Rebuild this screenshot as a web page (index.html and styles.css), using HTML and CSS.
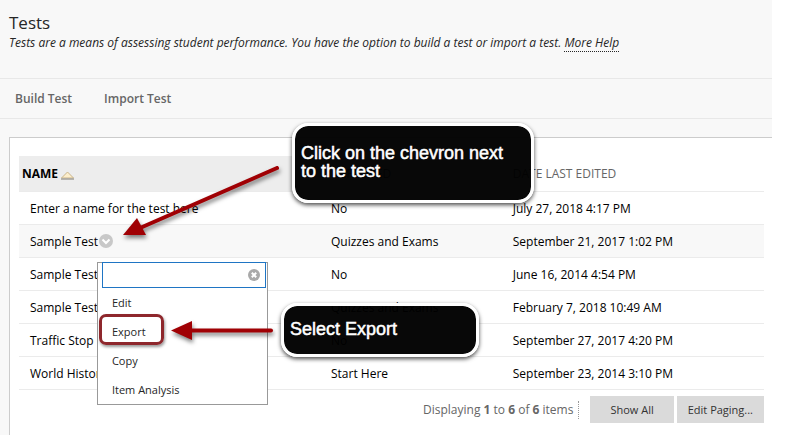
FILE: index.html
```html
<!DOCTYPE html>
<html lang="en">
<head>
    <meta charset="UTF-8">
    <meta name="viewport" content="width=device-width, initial-scale=1.0">
    <title>Tests</title>
    <link rel="stylesheet" href="styles.css">
</head>
<body>
    <main class="page">
        <header class="page-header">
            <h1>Tests</h1>
            <p>Tests are a means of assessing student performance. You have the option to build a test or import a test. <a href="#help">More Help</a></p>
        </header>

        <nav class="action-bar">
            <a href="#build">Build Test</a>
            <a href="#import">Import Test</a>
        </nav>

        <section class="panel">
            <table class="tests">
                <thead>
                    <tr>
                        <th class="col-name sorted" scope="col">NAME
                            <svg class="sort-icon" width="13" height="9" viewBox="0 0 13 9" aria-hidden="true">
                                <path d="M0.5 7 L6.5 1 L12.5 7 Z" fill="#fdeecb" stroke="#c9b48a"/>
                                <path d="M0 8 H13" stroke="#a3a09a" stroke-width="1.5"/>
                            </svg>
                        </th>
                        <th class="col-deployed" scope="col">DEPLOYED</th>
                        <th class="col-date" scope="col">DATE LAST EDITED</th>
                    </tr>
                </thead>
                <tbody>
                    <tr>
                        <td>Enter a name for the test here</td>
                        <td>No</td>
                        <td>July 27, 2018 4:17 PM</td>
                    </tr>
                    <tr class="active">
                        <td>
                            <div class="name-cell">
                                Sample Test
                                <span class="menu-anchor">
                                    <button class="chevron" type="button" aria-label="Test options">
                                        <svg width="14" height="14" viewBox="0 0 14 14" aria-hidden="true">
                                            <circle cx="7" cy="7" r="7" fill="#c8c8c8"/>
                                            <path d="M3.5 5.5 L7 9 L10.5 5.5" fill="none" stroke="#fff" stroke-width="2"/>
                                        </svg>
                                    </button>
                                    <span class="menu">
                                        <span class="menu-search">
                                            <input type="text" aria-label="Find option">
                                            <button type="button" aria-label="Close menu">
                                                <svg width="12" height="12" viewBox="0 0 12 12" aria-hidden="true">
                                                    <circle cx="6" cy="6" r="6" fill="#a9a9a9"/>
                                                    <path d="M3.8 3.8 L8.2 8.2 M8.2 3.8 L3.8 8.2" stroke="#fff" stroke-width="2"/>
                                                </svg>
                                            </button>
                                        </span>
                                        <a href="#edit">Edit</a>
                                        <a class="marked" href="#export">Export</a>
                                        <a href="#copy">Copy</a>
                                        <a href="#analysis">Item Analysis</a>
                                    </span>
                                </span>
                            </div>
                        </td>
                        <td>Quizzes and Exams</td>
                        <td>September 21, 2017 1:02 PM</td>
                    </tr>
                    <tr>
                        <td>Sample Test</td>
                        <td>No</td>
                        <td>June 16, 2014 4:54 PM</td>
                    </tr>
                    <tr>
                        <td>Sample Test</td>
                        <td>Quizzes and Exams</td>
                        <td>February 7, 2018 10:49 AM</td>
                    </tr>
                    <tr>
                        <td>Traffic Stop C</td>
                        <td>No</td>
                        <td>September 27, 2017 4:20 PM</td>
                    </tr>
                    <tr>
                        <td>World History</td>
                        <td>Start Here</td>
                        <td>September 23, 2014 3:10 PM</td>
                    </tr>
                </tbody>
            </table>

            <div class="paging">
                <p>Displaying <b>1</b> to <b>6</b> of <b>6</b> items</p>
                <button class="show-all" type="button">Show All</button>
                <button class="edit-paging" type="button">Edit Paging...</button>
            </div>
        </section>

        <!-- Notes laid over the page -->
        <svg class="arrows" width="300" height="350" viewBox="0 0 300 350" aria-hidden="true">
            <g fill="#a00004" stroke="#a00004">
                <path d="M277 168 L140 228" stroke-width="4" stroke-linecap="round"/>
                <path d="M123 235 L137 218 L146 235 Z" stroke="none"/>
                <path d="M190 330.5 H271" stroke-width="4" stroke-linecap="round"/>
                <path d="M171 330.5 L192 321 V340 Z" stroke="none"/>
            </g>
        </svg>
        <div class="callout callout-chevron">Click on the chevron next to the test</div>
        <div class="callout callout-export">Select Export</div>
    </main>
</body>
</html>
```

FILE: styles.css
```css
* {
    box-sizing: border-box;
}
body {
    margin: 0;
    background-color: #fff;
    color: #000;
    font-family: "Open Sans", sans-serif;
    font-size: 12px;
}
a {
    color: inherit;
    text-decoration: none;
}
button {
    padding: 0;
    border: none;
    background: none;
    color: inherit;
    font: inherit;
    cursor: pointer;
}
svg {
    display: block;
}
.page {
    position: relative;
    display: flex;
    flex-direction: column;
    min-height: 100vh;
    margin-right: 25px;
    background-color: #f8f8f8;
}

/* Title and action bar */
.page-header {
    padding: 12px 9px 26px;
    border-bottom: 1px solid #e8e8e8;
    color: #262626;
}
.page-header h1 {
    margin: 0;
    font-size: 17px;
    font-weight: normal;
    line-height: 22px;
}
.page-header p {
    margin: 0;
    font-style: italic;
    line-height: 18px;
}
.page-header a {
    border-bottom: 1px dotted #262626;
}
.action-bar {
    display: flex;
    gap: 32px;
    padding: 10px 15px;
    border-bottom: 1px solid #e8e8e8;
    color: #666;
    font-weight: 600;
    line-height: 19px;
}

/* Table of tests */
.panel {
    flex: 1;
    margin: 18px 0 0 9px;
    padding: 18px 8px 11px 9px;
    border: solid #ccc;
    border-width: 1px 0 0 1px;
    background-color: #fff;
}
.tests {
    width: 100%;
    border-collapse: separate;
    border-spacing: 0;
    table-layout: fixed;
}
.tests th,
.tests td {
    height: 33px;
    padding: 0 11px;
    border-bottom: 1px solid #ebebeb;
    text-align: left;
}
.tests th {
    height: 36px;
    color: #666;
    font-weight: normal;
}
.tests th.sorted {
    padding-left: 3px;
    background-color: #ededed;
    color: #000;
    font-weight: bold;
}
.col-name {
    width: 40.4%;
}
.col-deployed {
    width: 24.4%;
}
.sort-icon {
    display: inline-block;
    vertical-align: -2px;
}
.active {
    background-color: #f8f8f8;
}
.name-cell {
    display: flex;
    align-items: center;
    gap: 1px;
}
.menu-anchor {
    position: relative;
}
.chevron {
    display: block;
}

/* Options menu */
.menu {
    position: absolute;
    top: 28px;
    left: -2px;
    z-index: 1;
    display: flex;
    flex-direction: column;
    width: 171px;
    padding: 0 1px 0 4px;
    border: 1px solid #999;
    background-color: #fff;
    color: #262626;
    font-size: 11px;
}
.menu-search {
    display: flex;
    align-items: center;
    height: 26px;
    margin-top: -1px;
    padding-right: 5px;
    border: 1px solid #1f75c4;
}
.menu-search input {
    flex: 1;
    min-width: 0;
    border: none;
    outline: none;
    background: none;
}
.menu a {
    position: relative;
    padding: 0 10px;
    line-height: 29px;
}
.menu .marked::after {
    content: "";
    position: absolute;
    top: -3px;
    left: -3px;
    box-sizing: border-box;
    width: 65px;
    height: 31px;
    border: 3px solid #8e272c;
    border-radius: 7px;
    box-shadow: 1px 2px 3px rgba(0, 0, 0, 0.4);
}

/* Paging */
.paging {
    display: flex;
    justify-content: flex-end;
    align-items: center;
    gap: 3px;
    margin-top: 6px;
    color: #666;
}
.paging p {
    margin: 0 8px 0 0;
    padding-right: 5px;
    border-right: 1px dotted #999;
    line-height: 18px;
}
.paging button {
    height: 27px;
    background-color: #dadada;
    color: #333;
    font-size: 11px;
}
.paging .show-all {
    padding: 0 20px;
}
.paging .edit-paging {
    padding: 0 11px;
}

/* Callouts and arrows */
.arrows {
    position: absolute;
    top: 0;
    left: 0;
    z-index: 2;
    filter: drop-shadow(1px 3px 2px rgba(0, 0, 0, 0.5));
    pointer-events: none;
}
.callout {
    position: absolute;
    z-index: 2;
    display: flex;
    align-items: center;
    padding: 0 20px 2px 6px;
    border: 3px solid #fff;
    border-radius: 16px;
    background-color: rgba(0, 0, 0, 0.97);
    background-clip: padding-box;
    box-shadow: 0 2px 4px rgba(0, 0, 0, 0.7);
    color: #fff;
    font-family: "Liberation Sans", Arial, sans-serif;
    font-size: 18px;
    line-height: 18px;
    -webkit-text-stroke: 0.5px #fff;
}
.callout-chevron {
    top: 123px;
    left: 292px;
    width: 242px;
    height: 80px;
}
.callout-export {
    top: 303px;
    left: 281px;
    width: 198px;
    height: 54px;
}
```
